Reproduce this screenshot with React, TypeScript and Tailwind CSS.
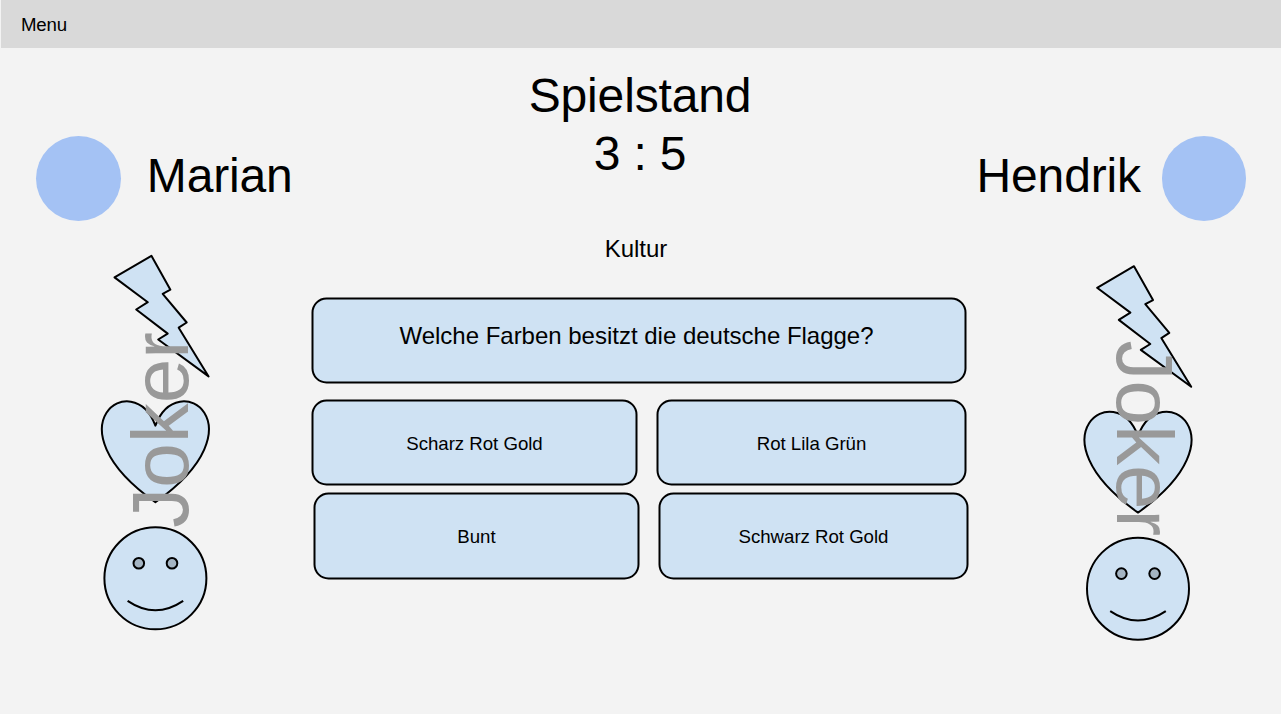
import type { ReactNode } from "react";

function Jokers() {
  return (
    <svg
      width="128"
      height="392"
      viewBox="92 246 128 392"
      fill="#cfe2f3"
      stroke="#000"
      strokeWidth="2"
      strokeLinejoin="round"
      className="block"
    >
      <path d="M151.4 255.8 170.4 289.7 162.7 293.8 186.7 322.5 178.7 327.7 208.6 376.4 158.2 339.5 167.7 333.6 136.2 309.5 147.8 302.2 114.5 277.4Z" />
      <path d="M155.4 425.6C177.5 366 263.7 425.6 155.4 502.2C47.1 425.6 133.3 366 155.4 425.6Z" />
      <circle cx="155.4" cy="578.3" r="51" />
      <circle cx="138.8" cy="563.2" r="5.3" fill="#a5b5c3" />
      <circle cx="172" cy="563.2" r="5.3" fill="#a5b5c3" />
      <path d="M127.6 600.8Q155.4 619.6 183.2 600.8" fill="none" />
    </svg>
  );
}

function Avatar() {
  return <div className="size-[84.5px] shrink-0 rounded-full bg-[#a4c2f4]" />;
}

function Answer({ children, className }: { children: ReactNode; className: string }) {
  return (
    <button
      className={`flex items-center justify-center rounded-[15px] border-2 border-black bg-[#cfe2f3] text-[18.67px] tracking-[-0.03px] ${className}`}
    >
      {children}
    </button>
  );
}

export default function App() {
  return (
    <div className="flex h-[714px] w-[1281px] flex-col overflow-hidden bg-[#f3f3f3] font-['Liberation_Sans',Arial,sans-serif] text-black">
      <header className="ml-px flex h-12 shrink-0 items-center bg-[#d9d9d9] pt-0.5 pl-5 text-[18.67px] tracking-[-0.2px]">
        Menu
      </header>

      <main className="grid flex-1 grid-cols-[311px_658px_312px]">
        <section>
          <div className="flex items-center pt-[88.3px] pl-[36.3px]">
            <Avatar />
            <h2 className="pb-1.5 pl-[26px] text-5xl leading-[56px] tracking-[-0.15px]">Marian</h2>
          </div>
          <div className="relative mt-[25.2px] ml-[92px] w-32">
            <Jokers />
            <span className="absolute top-[86px] left-[23px] rotate-180 text-[80px] leading-[92px] text-[#999999] [writing-mode:vertical-rl]">
              Joker
            </span>
          </div>
        </section>

        <section className="flex flex-col">
          <div className="flex w-[658px] flex-col items-center pt-[19px] text-center">
            <h1 className="text-5xl leading-[57.5px] tracking-[-0.15px]">
              Spielstand
              <br />3 : 5
            </h1>
            <p className="mt-[53px] mr-2 text-2xl leading-7">Kultur</p>
          </div>
          <div className="translate-x-[0.5px] translate-y-[0.5px]">
            <div className="mt-[34px] flex h-[86px] w-[655px] justify-center rounded-[15px] border-2 border-black bg-[#cfe2f3] pt-[21.5px] pr-[5px] text-2xl leading-7 tracking-[-0.01px]">
              Welche Farben besitzt die deutsche Flagge?
            </div>
            <div className="mt-4 flex gap-[19px]">
              <Answer className="h-[86px] w-[326px] pt-0.5">Scharz Rot Gold</Answer>
              <Answer className="h-[86px] w-[310px] pt-0.5">Rot Lila Grün</Answer>
            </div>
            <div className="mt-[7px] ml-0.5 flex gap-[19px]">
              <Answer className="h-[87px] w-[326px]">Bunt</Answer>
              <Answer className="h-[87px] w-[310px]">Schwarz Rot Gold</Answer>
            </div>
          </div>
        </section>

        <section>
          <div className="flex items-center justify-end pt-[88.3px] pr-[35px]">
            <h2 className="pr-[20.6px] pb-1.5 text-5xl leading-[56px] tracking-[-0.15px]">Hendrik</h2>
            <Avatar />
          </div>
          <div className="relative mt-[35.2px] ml-[105px] w-32 translate-x-[0.6px] translate-y-[0.4px]">
            <Jokers />
            <span className="absolute top-[84px] left-[23px] text-[80px] leading-[92px] text-[#999999] [writing-mode:vertical-rl]">
              Joker
            </span>
          </div>
        </section>
      </main>
    </div>
  );
}
